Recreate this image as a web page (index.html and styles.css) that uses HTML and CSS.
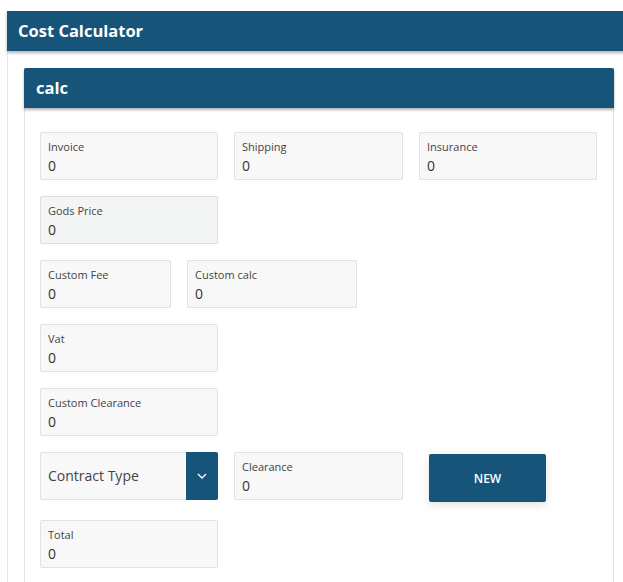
FILE: index.html
```html
<!DOCTYPE html>
<html>
<head>
<meta charset="utf-8">
<link rel="stylesheet" href="styles.css">
</head>
<body>
<div class="outer">
  <div class="outer-head">Cost Calculator</div>
  <div class="outer-body">
    <div class="inner">
      <div class="inner-head">calc</div>
      <div class="inner-body">
        <div class="row">
          <div class="field w177"><div class="lbl">Invoice</div><div class="val">0</div></div>
          <div class="field w168"><div class="lbl">Shipping</div><div class="val">0</div></div>
          <div class="field w177"><div class="lbl">Insurance</div><div class="val">0</div></div>
        </div>
        <div class="row">
          <div class="field w177 tint"><div class="lbl">Gods Price</div><div class="val">0</div></div>
        </div>
        <div class="row">
          <div class="field w130"><div class="lbl">Custom Fee</div><div class="val">0</div></div>
          <div class="field w169"><div class="lbl">Custom calc</div><div class="val">0</div></div>
        </div>
        <div class="row">
          <div class="field w177"><div class="lbl">Vat</div><div class="val">0</div></div>
        </div>
        <div class="row">
          <div class="field w177"><div class="lbl">Custom Clearance</div><div class="val">0</div></div>
        </div>
        <div class="row">
          <div class="select w177">
            <span class="sel-text">Contract Type</span>
            <span class="sel-btn"><svg width="10" height="6" viewBox="0 0 10 6"><path d="M1 1l4 4 4-4" fill="none" stroke="#fff" stroke-width="1.4"/></svg></span>
          </div>
          <div class="field w168"><div class="lbl">Clearance</div><div class="val">0</div></div>
          <button class="btn">NEW</button>
        </div>
        <div class="row last">
          <div class="field w177"><div class="lbl">Total</div><div class="val">0</div></div>
        </div>
      </div>
    </div>
  </div>
</div>
</body>
</html>
```
FILE: styles.css
```css
html, body { margin: 0; padding: 0; background: #fff; overflow: hidden; }
body { font-family: "Open Sans", "Noto Sans", sans-serif; color: #333; }
.outer {
  margin: 11px 0 0 7px;
  width: 630px;
  border-left: 1px solid #e6e6e6;
  border-right: 1px solid #e6e6e6;
}
.outer-head {
  height: 40px;
  background: #16547a;
  color: #fff;
  font-weight: 700;
  font-size: 16.5px;
  line-height: 40px;
  padding-left: 11px;
  margin-left: -1px;
  box-shadow: 0 2px 3px rgba(0,0,0,0.3);
  position: relative;
}
.outer-body { padding: 17px 0 0 16px; }
.inner {
  width: 588px;
  border-left: 1px solid #e3e3e3;
  border-right: 1px solid #e3e3e3;
}
.inner-head {
  height: 40px;
  background: #16547a;
  color: #fff;
  font-weight: 700;
  font-size: 16.5px;
  line-height: 40px;
  padding-left: 12px;
  margin: 0 -1px;
  border-radius: 2px 2px 0 0;
  box-shadow: 0 2px 3px rgba(0,0,0,0.3);
  position: relative;
}
.inner-body {
  padding: 24px 0 40px 15px;
  display: flex;
  flex-direction: column;
  gap: 16px;
}
.row { display: flex; gap: 16px; align-items: flex-start; }
.row.last { margin-top: 2px; }
.field {
  box-sizing: border-box;
  height: 48px;
  background: #f8f8f8;
  border: 1px solid #e2e2e2;
  border-radius: 2px;
  padding: 6px 0 0 7px;
}
.field.tint { background: #f3f6f5; border-color: #dcdedd; }
.w177 { width: 178px; }
.w168 { width: 169px; }
.w130 { width: 131px; }
.w169 { width: 170px; }
.lbl { font-size: 11px; line-height: 16px; color: #444; }
.val { font-size: 14px; line-height: 20px; color: #333; margin-top: 1px; }
.select {
  box-sizing: border-box;
  height: 48px;
  background: #f8f8f8;
  border: 1px solid #e2e2e2;
  border-radius: 2px;
  display: flex;
  align-items: stretch;
}
.sel-text { flex: 1; padding-left: 7px; font-size: 14px; line-height: 46px; color: #444; }
.sel-btn {
  width: 32px;
  margin: -1px -1px -1px 0;
  background: #16547a;
  border-radius: 0 2px 2px 0;
  display: flex;
  align-items: center;
  justify-content: center;
}
.btn {
  margin: 2px 0 0 10px;
  width: 117px;
  height: 48px;
  background: #16547a;
  color: #fff;
  border: none;
  border-radius: 2px;
  font-family: "Open Sans", sans-serif;
  font-size: 12px;
  font-weight: 600;
  box-shadow: 0 3px 8px rgba(0,0,0,0.12);
}
```
